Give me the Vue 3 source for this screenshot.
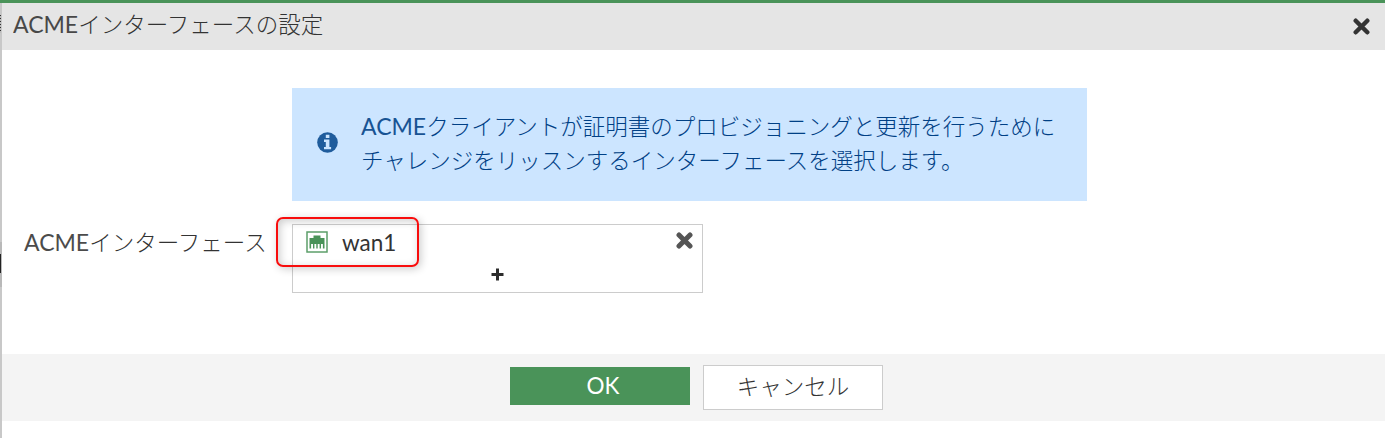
<script setup>
const messageLines = [
  'クライアントが証明書のプロビジョニングと更新を行うために',
  'チャレンジをリッスンするインターフェースを選択します。'
]
</script>

<template>
  <div class="page">
    <div class="edge">
      <span class="edge-text"></span>
      <span class="edge-shade"></span>
      <span class="edge-mark"></span>
    </div>
    <section class="dialog">
      <header class="header">
        <h1 class="title"><span class="latin prefix">ACME</span>インターフェースの設定</h1>
        <svg class="close" width="17" height="17" viewBox="0 0 17 17">
          <path d="M2.7 2.7 14.3 14.3M14.3 2.7 2.7 14.3" stroke="#333" stroke-width="4.4" stroke-linecap="round" />
        </svg>
      </header>

      <main class="body">
        <div class="info">
          <svg class="info-icon" width="21" height="21" viewBox="0 0 21 21">
            <circle cx="10.5" cy="10.5" r="10.3" fill="#1f5c9c" />
            <path d="M8.8 2.8h3.6v3.2H8.8zM7 7.6h5.4v7.3h1.7v2.3H7v-2.3h1.8V9.9H7z" fill="#cce5ff" />
          </svg>
          <p class="message"><span class="latin prefix">ACME</span>{{ messageLines[0] }}<br />{{ messageLines[1] }}</p>
        </div>

        <div class="row">
          <label class="label"><span class="latin prefix">ACME</span>インターフェース</label>
          <div class="picker">
            <div class="entry">
              <svg class="port" width="22" height="22" viewBox="0 0 22 22">
                <rect x="1" y="1" width="20" height="20" fill="#fff" stroke="#5c9f6a" stroke-width="1.5" />
                <path d="M3.500 17.500V7H7.500V4.500h7V7h4v10.500h-1.600V13h-1.900v4.500h-1.400V13h-1.900v4.500h-1.400V13H8.400v4.500H7V13H5.100v4.500z" fill="#4a9359" />
              </svg>
              <span class="latin name">wan1</span>
              <svg class="remove" width="17" height="17" viewBox="0 0 17 17">
                <path d="M3 3 14 14M14 3 3 14" stroke="#555" stroke-width="5" stroke-linecap="round" />
              </svg>
            </div>
            <div class="add">
              <svg width="13" height="13" viewBox="0 0 13 13">
                <path d="M6.500 .5v12M.5 6.500h12" stroke="#2c2c2c" stroke-width="3" />
              </svg>
            </div>
            <span class="marker"></span>
          </div>
        </div>
      </main>

      <footer class="footer">
        <button class="ok latin">OK</button>
        <button class="cancel">キャンセル</button>
      </footer>
    </section>
  </div>
</template>

<style>
body {
  margin: 0;
  background: #fff;
  overflow: hidden;
}
</style>

<style scoped>
.page {
  display: flex;
  box-sizing: border-box;
  width: 1385px;
  height: 438px;
  border-top: 3px solid #4a9359;
  background: #fff;
  color: #333;
  font-family: "Noto Sans CJK JP Light", "Noto Sans CJK JP", sans-serif;
  font-size: 22.5px;
  font-weight: 300;
}
.latin {
  font-family: Lato, sans-serif;
  font-size: 22.5px;
  font-weight: 400;
  line-height: 0;
}
.prefix {
  font-size: 23px;
  opacity: 0.88;
}
.edge {
  position: relative;
  width: 2px;
  background: #c8c8c8;
}
.edge span {
  position: absolute;
  left: 0;
}
.edge-text {
  top: 12px;
  width: 1px;
  height: 18px;
  background: repeating-linear-gradient(#333 0 1px, #bbb 1px 3px);
}
.edge-shade {
  top: 239px;
  width: 2px;
  height: 45px;
  background: #b9b9b9;
}
.edge-mark {
  top: 251px;
  width: 1px;
  height: 19px;
  background: #222;
}
.dialog {
  flex: 1;
}
.header {
  display: flex;
  justify-content: space-between;
  box-sizing: border-box;
  height: 47px;
  padding: 0 15px 0 11px;
  background: #e5e5e5;
}
.title {
  margin: 0;
  font-size: inherit;
  font-weight: inherit;
  line-height: 40px;
}
.close {
  margin-top: 15px;
}
.body {
  box-sizing: border-box;
  height: 304px;
  padding-top: 38px;
}
.info {
  display: flex;
  box-sizing: border-box;
  width: 795px;
  height: 113px;
  margin-left: 290px;
  padding: 20px 0 0 25px;
  background: #cce5ff;
  color: #004085;
}
.info-icon {
  margin: 24px 23px 0 0;
}
.message {
  margin: 0;
  line-height: 34px;
  white-space: nowrap;
}
.row {
  display: flex;
  margin-top: 23px;
}
.label {
  box-sizing: border-box;
  width: 290px;
  padding-left: 22px;
  line-height: 34px;
  white-space: nowrap;
}
.picker {
  position: relative;
  box-sizing: border-box;
  width: 411px;
  height: 69px;
  border: 1px solid #ccc;
}
.entry {
  display: flex;
  height: 35px;
  padding: 0 9px 0 13px;
}
.port {
  margin-top: 6px;
}
.name {
  margin-left: 14px;
  line-height: 36px;
}
.remove {
  margin: 7px 0 0 auto;
}
.add {
  display: flex;
  justify-content: center;
  padding-top: 8px;
}
.marker {
  position: absolute;
  top: -8px;
  left: -17px;
  box-sizing: border-box;
  width: 143px;
  height: 50px;
  border: 2px solid #f80d0d;
  border-radius: 7px;
  box-shadow: 2px 2px 8px rgba(0, 0, 0, 0.2), inset 2px 2px 8px rgba(0, 0, 0, 0.2);
}
.footer {
  display: flex;
  gap: 13px;
  box-sizing: border-box;
  height: 67px;
  padding: 11px 0 0 508px;
  background: #f4f4f4;
}
button {
  box-sizing: border-box;
  width: 180px;
  padding: 0;
}
.ok {
  height: 38px;
  margin-top: 2px;
  border: 0;
  background: #4a9359;
  color: #fff;
  line-height: 38px;
  padding-left: 6px;
}
.cancel {
  height: 45px;
  padding-bottom: 5px;
  border: 1px solid #ccc;
  background: #fff;
  color: #333;
  font: inherit;
  line-height: 38px;
}
</style>
